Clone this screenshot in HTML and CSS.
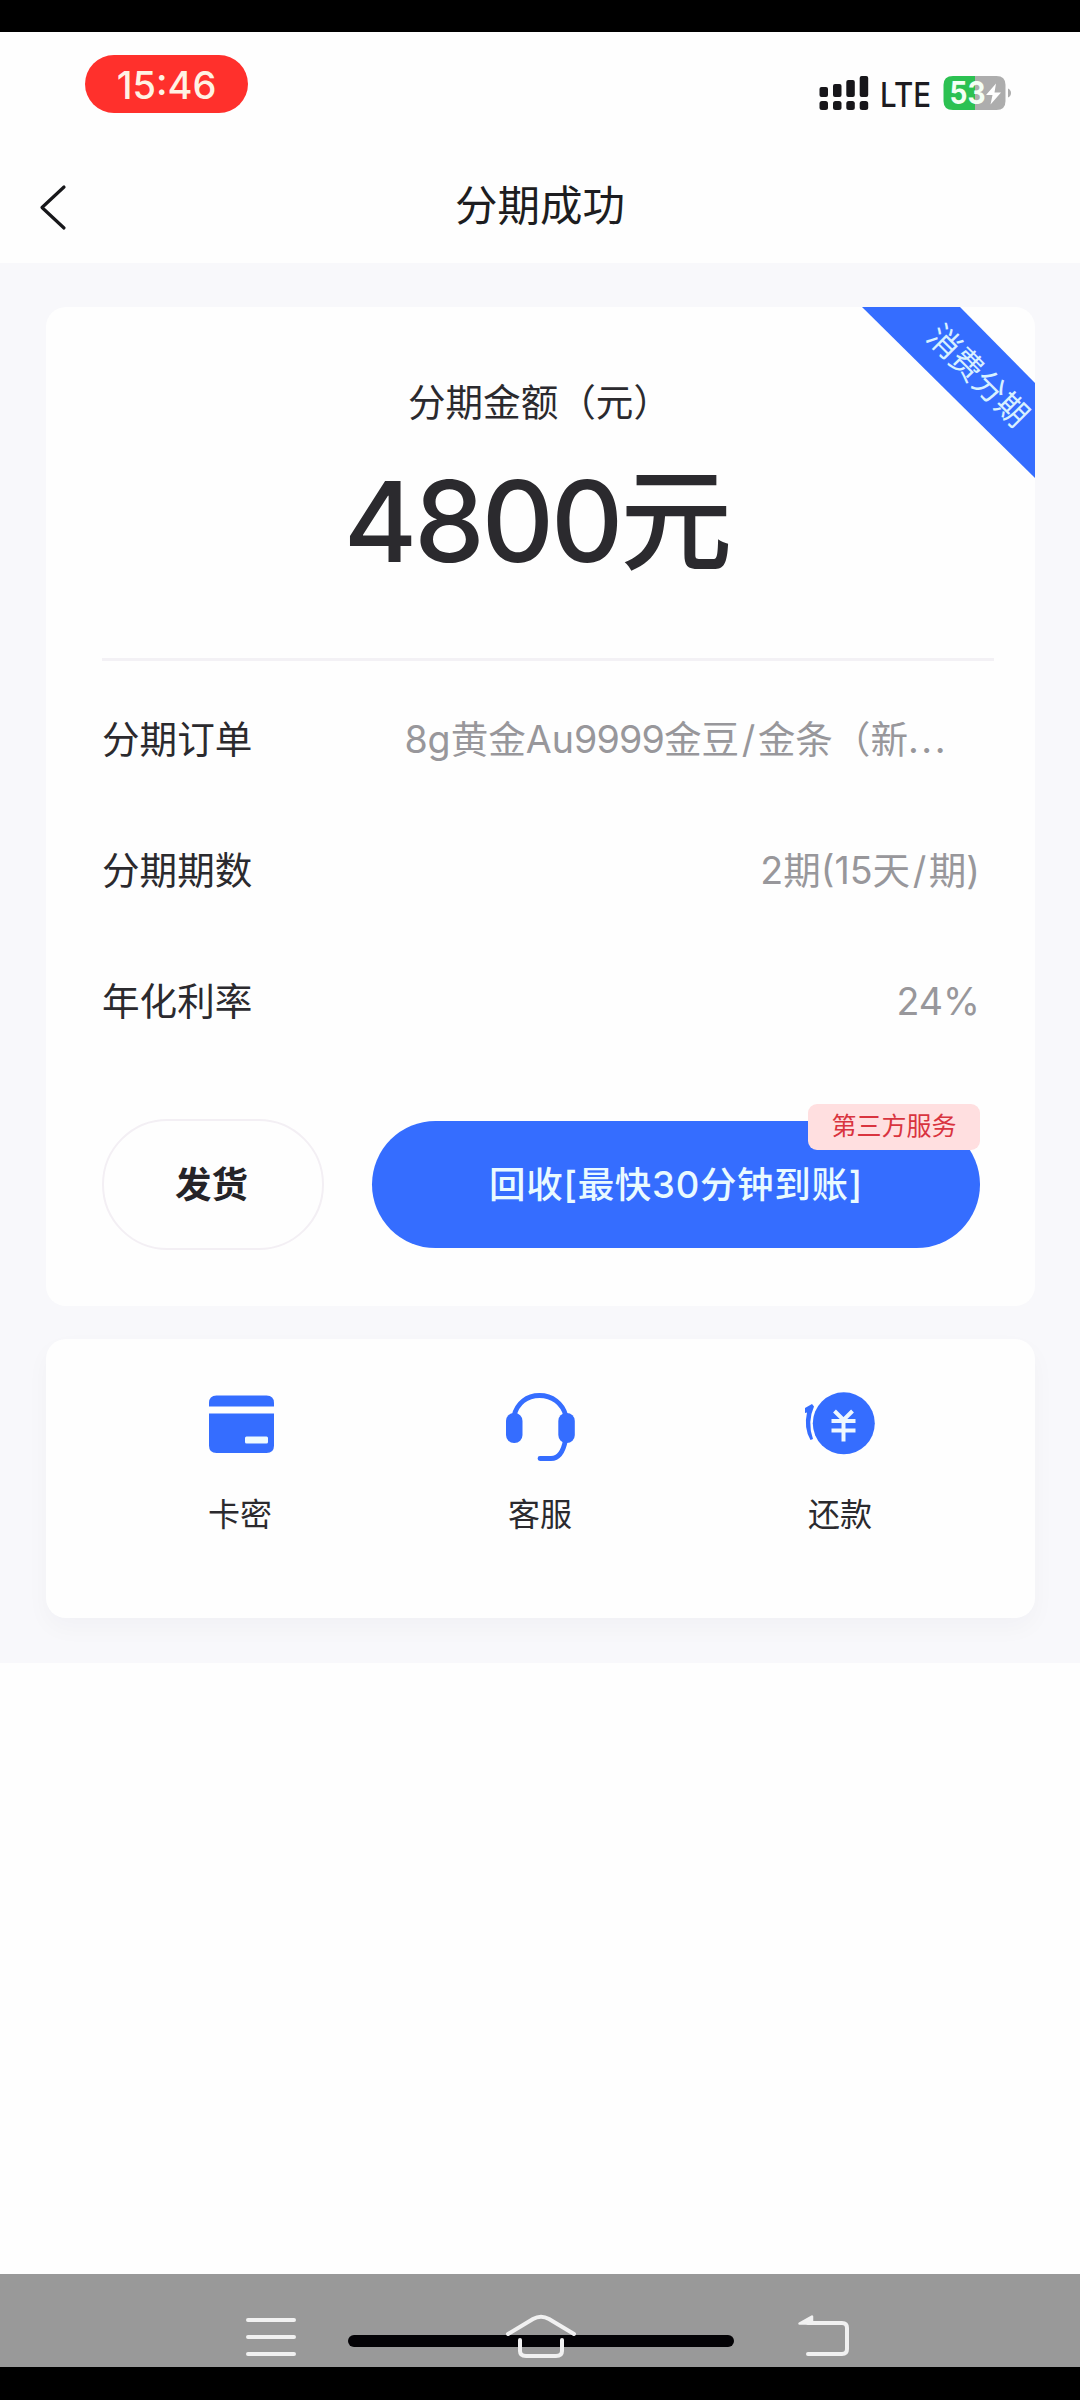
FILE: index.html
```html
<!DOCTYPE html>
<html lang="zh-CN">
<head>
<meta charset="utf-8">
<title>分期成功</title>
<link rel="stylesheet" href="styles.css">
</head>
<body>
<div class="screen">
  <header class="top">
    <div class="status">
      <span class="clock"><span>15:46</span></span>
      <div class="status-right">
        <svg class="signal" width="50" height="36" viewBox="0 0 50 36" fill="#17161a">
          <rect x="0.500" y="12" width="8.500" height="10" rx="2"/><rect x="14" y="9" width="8.500" height="13" rx="2"/><rect x="27.300" y="5" width="8.500" height="17" rx="2"/><rect x="40.700" y="1" width="8.500" height="21" rx="2"/>
          <rect x="0.500" y="26" width="8.500" height="9" rx="2.500"/><rect x="14" y="26" width="8.500" height="9" rx="2.500"/><rect x="27.300" y="26" width="8.500" height="9" rx="2.500"/><rect x="40.700" y="26" width="8.500" height="9" rx="2.500"/>
        </svg>
        <svg class="network" width="62" height="44" viewBox="0 0 62 44"><text class="net-text" x="0" y="31.500" textLength="51" lengthAdjust="spacingAndGlyphs">LTE</text></svg>
        <svg class="battery" width="70" height="36" viewBox="0 0 70 36">
          <path d="M11 1H33V35H11Q1.500 35 1.500 26V10Q1.500 1 11 1Z" fill="#2cc152"/>
          <path d="M33 1H54.500Q63.500 1 63.500 10V26Q63.500 35 54.500 35H33Z" fill="#adadad"/>
          <path d="M66 13.500Q69 15 69 18T66 22.500Z" fill="#adadad"/>
          <text class="bat-text" x="7.500" y="29" textLength="36" lengthAdjust="spacingAndGlyphs">53</text>
          <path d="M54 8.500L44 20H50.500L48.500 29.500L59 17.500H52.500Z" fill="#fff"/>
        </svg>
      </div>
    </div>
    <nav class="nav">
      <svg class="back" width="30" height="50" viewBox="0 0 30 50"><path d="M25 5L3 25.500L25 46" fill="none" stroke="#17171a" stroke-width="3.200" stroke-linecap="round" stroke-linejoin="round"/></svg>
      <h1 class="title">分期成功</h1>
    </nav>
  </header>

  <main class="content">
    <section class="card order">
      <div class="ribbon"><span class="ribbon-text">消费分期</span></div>
      <p class="amount-label">分期金额（元）</p>
      <p class="amount"><span class="num">4800</span><span>元</span></p>
      <dl class="details">
        <div class="row row-order"><dt>分期订单</dt><dd>8g黄金Au<span class="digits">9999</span>金豆<span class="slash">/</span>金条（新<span class="dots">...</span></dd></div>
        <div class="row"><dt>分期期数</dt><dd>2期(15天<span class="slash">/</span>期)</dd></div>
        <div class="row"><dt>年化利率</dt><dd>24%</dd></div>
      </dl>
      <div class="actions">
        <button class="btn ghost">发货</button>
        <button class="btn primary">回收[最快30分钟到账]<span class="badge">第三方服务</span></button>
      </div>
    </section>

    <section class="card shortcuts">
      <div class="shortcut">
        <svg width="80" height="80" viewBox="0 0 80 80" fill="#356dff">
          <path d="M9 22.500V19Q9 11.500 16.500 11.500H66.500Q74 11.500 74 19V22.500Z"/>
          <path d="M9 29.500H74V61.500Q74 69 66.500 69H16.500Q9 69 9 61.500Z"/>
          <rect x="45" y="52.500" width="23" height="7" rx="1.500" fill="#eefaff"/>
        </svg>
        <span>卡密</span>
      </div>
      <div class="shortcut">
        <svg width="80" height="80" viewBox="0 0 80 80" fill="#356dff">
          <path d="M14 32C17 19 27 11.500 39.500 11.500S62.500 19 66 32M65.500 56Q62 74.500 51 74.500H40" fill="none" stroke="#356dff" stroke-width="4.800" stroke-linecap="round"/>
          <rect x="6" y="29" width="16.500" height="30" rx="8"/>
          <rect x="58.300" y="29" width="16.500" height="30" rx="8"/>
        </svg>
        <span>客服</span>
      </div>
      <div class="shortcut">
        <svg width="80" height="80" viewBox="0 0 80 80" fill="#356dff">
          <path d="M5 24L12 20L14 22.500Q7 38 13 55L10.500 56Q3.500 44 7 28.500L5 29Z"/>
          <circle cx="43.800" cy="39.300" r="31"/>
          <path d="M34.500 27L43.500 36L52.500 27M43.500 36V57.500M31.500 37H55.500M31.500 46.500H55.500" fill="none" stroke="#eef7ff" stroke-width="4"/>
        </svg>
        <span>还款</span>
      </div>
    </section>
  </main>

  <footer class="sysbar">
    <div class="home-indicator"></div>
    <svg class="sys-icons" width="1080" height="93" viewBox="0 0 1080 93" fill="none" stroke="#f1f1f1" stroke-width="4" stroke-linecap="round" stroke-linejoin="round">
      <path d="M248 46H294M248 63H294M248 80H294"/>
      <path d="M508 60L533 45Q541 40.500 549 45L574 60"/>
      <path d="M520 66V77Q520 82 526 82H556Q562 82 562 77V66"/>
      <path d="M808 49H842Q847 49 847 54V75Q847 80 842 80H808"/>
      <path d="M799.500 49.500L812 42.500V49.500Z" fill="#f1f1f1" stroke-width="2.500"/>
    </svg>
  </footer>
</div>
</body>
</html>
```
FILE: styles.css
```css
* { box-sizing: border-box; margin: 0; padding: 0; }

body {
  background: #000;
  font-family: Inter, "Noto Sans CJK SC", sans-serif;
  color: #2b2a2e;
}

.screen {
  width: 1080px;
  height: 2400px;
  padding: 32px 0 33px;
  background: #000;
  display: flex;
  flex-direction: column;
}

.top { height: 231px; background: #fefefe; }

.status {
  height: 120px;
  padding: 23px 68px 0 85px;
  display: flex;
  justify-content: space-between;
  align-items: flex-start;
}

.clock {
  width: 163px;
  height: 58px;
  border-radius: 29px;
  background: #ff302c;
  color: #fff2e4;
  font-size: 38px;
  font-weight: 500;
  line-height: 60px;
  text-align: center;
}

.status-right { display: flex; padding-top: 20px; }
.network { margin-left: 11px; }
.net-text { font: 500 34px Inter, sans-serif; fill: #1c1b20; }
.bat-text { font: 700 31px Inter, sans-serif; fill: #f4fff4; }

.nav {
  height: 110px;
  padding-left: 39px;
  display: grid;
  grid-template-columns: 39px 1fr 78px;
  align-items: start;
}

.back { margin-top: 30px; }

.title {
  margin-top: 23px;
  font-size: 42.5px;
  font-weight: 400;
  line-height: 62px;
  text-align: center;
  color: #1d1d20;
}

.content {
  flex: 1;
  padding: 44px 45px 0 46px;
  background: linear-gradient(#f8f8fb 1400px, #fefefe 1400px);
}

.card { width: 989px; background: #fefefe; border-radius: 20px; }

.order {
  position: relative;
  height: 999px;
  padding: 68px 56px 0;
}

.ribbon {
  position: absolute;
  top: 0;
  right: 0;
  width: 173px;
  height: 171px;
  background: #356dff;
  clip-path: polygon(0 0, 98px 0, 100% 76px, 100% 100%);
}

.ribbon-text {
  position: absolute;
  left: 36px;
  top: 46px;
  width: 160px;
  text-align: center;
  font-size: 32px;
  line-height: 46px;
  color: #d8f1ff;
  transform: rotate(45deg);
}

.amount-label {
  margin-right: 2px;
  font-size: 37.6px;
  line-height: 56px;
  text-align: center;
}

.amount {
  margin: 25px 5px 0 0;
  height: 130px;
  font-size: 112px;
  font-weight: 500;
  line-height: 130px;
  text-align: center;
  white-space: nowrap;
}

.num { letter-spacing: -3px; }

.details {
  margin-top: 72px;
  padding-top: 13px;
  border-top: 3px solid #f3f1f5;
  width: 892px;
}

.row {
  height: 131px;
  padding-right: 14px;
  display: flex;
  justify-content: space-between;
  align-items: center;
  font-size: 37.6px;
  line-height: 56px;
}

.row-order { padding-right: 46px; }
.row dd { color: #98979b; white-space: nowrap; }
.row .digits { letter-spacing: -0.8px; }
.row .slash { padding: 0 2.5px; }
.row .dots { letter-spacing: 2.5px; }

.actions {
  margin-top: 52px;
  width: 878px;
  display: flex;
  justify-content: space-between;
  align-items: center;
}

.btn {
  border: 0;
  font-family: inherit;
  font-size: 36.5px;
  line-height: 54px;
  white-space: nowrap;
}

.ghost {
  width: 222px;
  height: 131px;
  padding-right: 3px;
  border: 2px solid #f3eff4;
  border-radius: 66px;
  background: #fefefe;
  color: #252428;
  font-weight: 700;
}

.primary {
  position: relative;
  width: 608px;
  height: 127px;
  border-radius: 64px;
  background: #356dff;
  color: #e9faff;
  font-weight: 500;
  letter-spacing: 0.7px;
}

.badge {
  position: absolute;
  top: -17px;
  right: 0;
  width: 172px;
  height: 46px;
  border-radius: 9px;
  background: #ffdfe0;
  color: #d9343f;
  font-size: 25px;
  font-weight: 400;
  letter-spacing: 0;
  line-height: 45px;
}

.shortcuts {
  height: 279px;
  margin-top: 33px;
  padding: 45px 45px 0 44px;
  display: grid;
  grid-template-columns: repeat(3, 1fr);
  box-shadow: 0 10px 24px rgba(40, 40, 60, 0.03);
}

.shortcut {
  display: flex;
  flex-direction: column;
  align-items: center;
  gap: 27px;
  font-size: 32px;
  line-height: 48px;
}

.sysbar {
  position: relative;
  height: 93px;
  background: #999;
}

.home-indicator {
  position: absolute;
  left: 348px;
  top: 61px;
  width: 386px;
  height: 12px;
  border-radius: 6px;
  background: #040306;
}

.sys-icons { position: absolute; left: 0; top: 0; }
```
